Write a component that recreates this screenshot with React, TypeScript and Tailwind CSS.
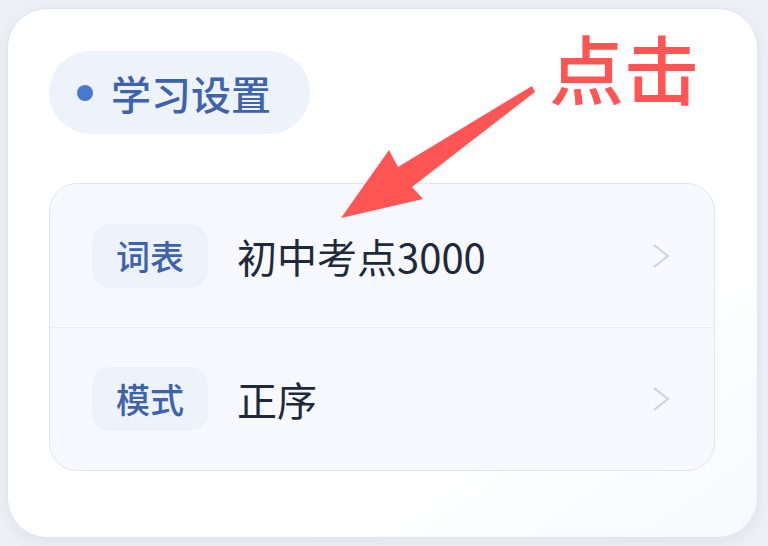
const rows = [
  { label: "词表", value: "初中考点3000" },
  { label: "模式", value: "正序" },
];

function Chevron() {
  return (
    <svg width="20" height="26" viewBox="0 0 20 26" className="shrink-0">
      <polyline
        points="3,2 17,13 3,24"
        fill="none"
        stroke="#c6d3ea"
        strokeWidth="2"
        strokeLinecap="butt"
        strokeLinejoin="miter"
      />
    </svg>
  );
}

export default function App() {
  return (
    <div
      className="w-[768px] h-[546px] bg-[#edf0f5] p-[7px] pt-[8px]"
      style={{ fontFamily: '"Noto Sans CJK SC", "Noto Sans", sans-serif' }}
    >
      <div className="relative w-[751px] h-[530px] rounded-[40px] bg-gradient-to-br from-white from-70% to-[#f7f9fc] border border-[#dfe6f2] shadow-[0_4px_16px_rgba(60,80,120,0.08)] px-[41px] pt-[42px]">
        {/* Section pill */}
        <div className="inline-flex items-center gap-[18px] h-[83px] pl-[28px] pr-[39px] rounded-full bg-[#edf2fb]">
          <span className="w-[16px] h-[16px] rounded-full bg-[#4a78cc]" />
          <span className="text-[40px] leading-none font-medium text-[#3d63ad]">
            学习设置
          </span>
        </div>

        {/* Settings list */}
        <div className="mt-[49px] w-[666px] rounded-[28px] bg-[#f7f9fe] border border-[#dfe5f3]">
          {rows.map((row, i) => (
            <div
              key={row.label}
              className={`flex items-center h-[143px] pl-[42px] pr-[43px] ${
                i > 0 ? "border-t border-[#ebeff7]" : ""
              }`}
            >
              <div className="flex items-center justify-center w-[116px] h-[64px] rounded-[18px] bg-[#edf2fb] text-[34px] leading-none font-medium text-[#3d63ad]">
                {row.label}
              </div>
              <div className="ml-[29px] flex-1 text-[40px] leading-none text-[#1e293b]">
                {row.value}
              </div>
              <Chevron />
            </div>
          ))}
        </div>

        {/* Annotation overlay */}
        <svg
          className="absolute left-[-8px] top-[-9px] pointer-events-none"
          width="768"
          height="546"
          viewBox="0 0 768 546"
        >
          <polygon
            points="341,218 389,150 398,167 532,86 535,92 412,187 423,199"
            fill="#ff5555"
          />
        </svg>
        <div className="absolute left-[541px] top-[20px] text-[75px] leading-none font-medium text-[#ff5555]">
          点击
        </div>
      </div>
    </div>
  );
}
